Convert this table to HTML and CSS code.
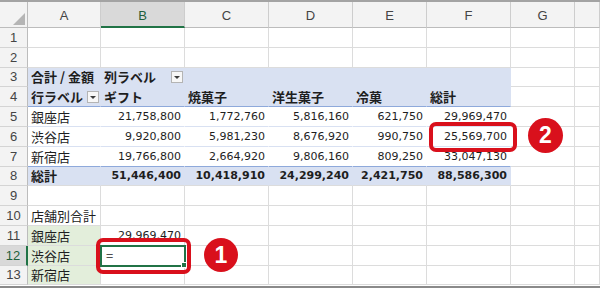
FILE: index.html
```html
<!DOCTYPE html>
<html lang="ja">
<head>
<meta charset="utf-8">
<link rel="stylesheet" href="styles.css">
</head>
<body>
<div class="frame">
  <div class="grid">
    <!-- header row -->
    <div class="c corner"><svg width="14" height="14" viewBox="0 0 14 14"><path d="M13 1V13H1Z" fill="#b5b5b5"/></svg></div>
    <div class="c ch">A</div>
    <div class="c ch selc">B</div>
    <div class="c ch">C</div>
    <div class="c ch">D</div>
    <div class="c ch">E</div>
    <div class="c ch">F</div>
    <div class="c ch">G</div>
    <div class="c ch"></div>
    <!-- row 1 -->
    <div class="c rh">1</div>
    <div class="c"></div><div class="c"></div><div class="c"></div><div class="c"></div><div class="c"></div><div class="c"></div><div class="c"></div><div class="c"></div>
    <!-- row 2 -->
    <div class="c rh">2</div>
    <div class="c"></div><div class="c"></div><div class="c"></div><div class="c"></div><div class="c"></div><div class="c"></div><div class="c"></div><div class="c"></div>
    <!-- row 3 -->
    <div class="c rh">3</div>
    <div class="c ph b">合計 / 金額</div>
    <div class="c ph b split">列ラベル<span class="dd"><svg width="6" height="4" viewBox="0 0 6 4"><path d="M0 0H6L3 3Z" fill="#3c3c3c"/></svg></span></div>
    <div class="c ph"></div><div class="c ph"></div><div class="c ph"></div><div class="c ph"></div>
    <div class="c"></div><div class="c"></div>
    <!-- row 4 -->
    <div class="c rh">4</div>
    <div class="c ph r4 b split">行ラベル<span class="dd"><svg width="6" height="4" viewBox="0 0 6 4"><path d="M0 0H6L3 3Z" fill="#3c3c3c"/></svg></span></div>
    <div class="c ph r4 b">ギフト</div>
    <div class="c ph r4 b">焼菓子</div>
    <div class="c ph r4 b">洋生菓子</div>
    <div class="c ph r4 b">冷菓</div>
    <div class="c ph r4 b">総計</div>
    <div class="c"></div><div class="c"></div>
    <!-- row 5 -->
    <div class="c rh">5</div>
    <div class="c pb">銀座店</div>
    <div class="c pb n">21,758,800</div>
    <div class="c pb n">1,772,760</div>
    <div class="c pb n">5,816,160</div>
    <div class="c pb n">621,750</div>
    <div class="c pb n">29,969,470</div>
    <div class="c"></div><div class="c"></div>
    <!-- row 6 -->
    <div class="c rh">6</div>
    <div class="c pb">渋谷店</div>
    <div class="c pb n">9,920,800</div>
    <div class="c pb n">5,981,230</div>
    <div class="c pb n">8,676,920</div>
    <div class="c pb n">990,750</div>
    <div class="c pb n">25,569,700</div>
    <div class="c"></div><div class="c"></div>
    <!-- row 7 -->
    <div class="c rh">7</div>
    <div class="c pb r7">新宿店</div>
    <div class="c pb r7 n">19,766,800</div>
    <div class="c pb r7 n">2,664,920</div>
    <div class="c pb r7 n">9,806,160</div>
    <div class="c pb r7 n">809,250</div>
    <div class="c pb r7 n">33,047,130</div>
    <div class="c"></div><div class="c"></div>
    <!-- row 8 -->
    <div class="c rh">8</div>
    <div class="c pt b">総計</div>
    <div class="c pt n b">51,446,400</div>
    <div class="c pt n b">10,418,910</div>
    <div class="c pt n b">24,299,240</div>
    <div class="c pt n b">2,421,750</div>
    <div class="c pt n b">88,586,300</div>
    <div class="c"></div><div class="c"></div>
    <!-- row 9 -->
    <div class="c rh">9</div>
    <div class="c"></div><div class="c"></div><div class="c"></div><div class="c"></div><div class="c"></div><div class="c"></div><div class="c"></div><div class="c"></div>
    <!-- row 10 -->
    <div class="c rh">10</div>
    <div class="c">店舗別合計</div>
    <div class="c"></div><div class="c"></div><div class="c"></div><div class="c"></div><div class="c"></div><div class="c"></div><div class="c"></div>
    <!-- row 11 -->
    <div class="c rh">11</div>
    <div class="c g">銀座店</div>
    <div class="c n">29,969,470</div>
    <div class="c"></div><div class="c"></div><div class="c"></div><div class="c"></div><div class="c"></div><div class="c"></div>
    <!-- row 12 -->
    <div class="c rh selr">12</div>
    <div class="c g">渋谷店</div>
    <div class="c act">=</div>
    <div class="c"></div><div class="c"></div><div class="c"></div><div class="c"></div><div class="c"></div><div class="c"></div>
    <!-- row 13 -->
    <div class="c rh">13</div>
    <div class="c g">新宿店</div>
    <div class="c"></div><div class="c"></div><div class="c"></div><div class="c"></div><div class="c"></div><div class="c"></div><div class="c"></div>
  </div>

  <div class="mark box1"></div>
  <div class="badge badge1">1</div>
  <div class="mark box2"></div>
  <div class="badge badge2">2</div>
</div>
</body>
</html>
```

FILE: styles.css
```css
body {
  margin: 0;
  background: #fff;
}

.frame {
  position: relative;
  width: 600px;
  height: 288px;
  overflow: hidden;
  box-sizing: border-box;
  padding-top: 2px;
  background: #fff;
  box-shadow: inset 0 2px 0 #a3a3a3, inset 0 -2px 0 #8a8a8a;
}

.grid {
  display: grid;
  grid-template-columns: 28px 73px 84px 84px 84px 74px 84px 64px 25px;
  grid-template-rows: 26px repeat(13, 19.8px);
}

.c {
  box-sizing: border-box;
  min-width: 0;
  border-right: 1px solid #dcdcdc;
  border-bottom: 1px solid #dcdcdc;
  display: flex;
  align-items: center;
  padding: 0 3px;
  white-space: nowrap;
  font-family: "Noto Sans CJK JP", sans-serif;
  font-size: 13px;
  line-height: 1;
  color: #1e1e1e;
}

.corner {
  background: #f3f3f3;
  border-right: 1px solid #bcbcbc;
  border-bottom: 1px solid #bcbcbc;
  align-items: flex-end;
  justify-content: flex-end;
  padding: 0 1px 1px 0;
}

.ch {
  background: #f3f3f3;
  border-right: 1px solid #cdcdcd;
  border-bottom: 1px solid #bcbcbc;
  justify-content: center;
  font-family: "Liberation Sans", sans-serif;
  font-size: 13px;
  color: #444;
  padding-top: 2px;
}

.selc {
  background: #d9d9d9;
  border-bottom: 2px solid #217346;
  color: #1f5f3b;
}

.rh {
  background: #f3f3f3;
  border-right: 1px solid #bcbcbc;
  border-bottom: 1px solid #d4d4d4;
  justify-content: center;
  font-family: "Liberation Sans", sans-serif;
  font-size: 13px;
  color: #444;
  padding: 0;
}

.selr {
  background: #d9d9d9;
  border-right: 2px solid #217346;
  color: #1f5f3b;
}

.b {
  font-weight: 700;
}

.n {
  justify-content: flex-end;
  font-family: "DejaVu Sans", sans-serif;
  font-size: 11px;
}

.split {
  justify-content: space-between;
  padding-right: 1px;
}

.dd {
  width: 12px;
  height: 12px;
  box-sizing: border-box;
  border: 1px solid #b4b4b4;
  background: #f7f7f7;
  display: flex;
  align-items: center;
  justify-content: center;
  padding-top: 2px;
}

.ph {
  background: #d9e1f2;
  border-right-color: transparent;
  border-bottom-color: transparent;
}

.r4 {
  border-bottom: 1px solid #8ea9db;
}

.pb {
  border-right-color: transparent;
  border-bottom-color: #d9e1f2;
}

.r7 {
  border-bottom-color: #8ea9db;
}

.pt {
  background: #d9e1f2;
  border-right-color: transparent;
}

.g {
  background: #e3eedb;
}

.act {
  position: relative;
  z-index: 1;
  outline: 2px solid #217346;
  outline-offset: -1px;
  padding-left: 5px;
}

.act::after {
  content: "";
  position: absolute;
  right: -3px;
  bottom: -3px;
  width: 4px;
  height: 4px;
  background: #217346;
  border: 1px solid #fff;
}

.mark {
  position: absolute;
  z-index: 2;
  box-sizing: border-box;
  border: 4px solid #d9101c;
  border-radius: 7px;
}

.box1 {
  left: 96px;
  top: 238px;
  width: 95px;
  height: 36px;
}

.box2 {
  left: 429px;
  top: 122px;
  width: 88px;
  height: 30px;
}

.badge {
  position: absolute;
  z-index: 2;
  width: 34px;
  height: 34px;
  border-radius: 50%;
  background: #d9101c;
  color: #fff;
  font-family: "Liberation Sans", sans-serif;
  font-weight: 700;
  font-size: 23px;
  display: flex;
  align-items: center;
  justify-content: center;
}

.badge1 {
  left: 204px;
  top: 238px;
}

.badge2 {
  left: 528px;
  top: 118px;
  width: 35px;
  height: 35px;
}
```
